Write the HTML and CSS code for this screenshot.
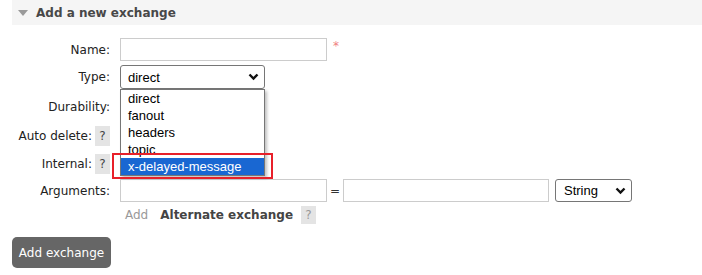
FILE: index.html
```html
<!DOCTYPE html>
<html>
<head>
<meta charset="utf-8">
<link rel="stylesheet" href="styles.css">
</head>
<body>
<div class="section">
  <div class="section-head">
    <span class="tri"></span>
    <h2 class="title">Add a new exchange</h2>
  </div>
  <div class="form">
    <div class="row r-name">
      <label class="lbl">Name:</label>
      <div class="field">
        <span class="input w207"></span>
        <span class="req">*</span>
      </div>
    </div>
    <div class="row r-type">
      <label class="lbl">Type:</label>
      <div class="field">
        <span class="select w145">direct
          <svg class="chev" width="11" height="8" viewBox="0 0 11 8"><path d="M1.5 1.5 L5.5 5.5 L9.5 1.5" fill="none" stroke="#111" stroke-width="2.4"/></svg>
        </span>
      </div>
    </div>
    <div class="row r-dur">
      <label class="lbl">Durability:</label>
    </div>
    <div class="row r-auto">
      <label class="lbl">Auto delete: <span class="help">?</span></label>
    </div>
    <div class="row r-int">
      <label class="lbl">Internal: <span class="help">?</span></label>
    </div>
    <div class="row r-args">
      <label class="lbl">Arguments:</label>
      <div class="field">
        <span class="input w207"></span>
        <span class="eq">=</span>
        <span class="input w206"></span>
        <span class="select w77 str">String
          <svg class="chev" width="11" height="8" viewBox="0 0 11 8"><path d="M1.5 1.5 L5.5 5.5 L9.5 1.5" fill="none" stroke="#111" stroke-width="2.4"/></svg>
        </span>
      </div>
    </div>
    <div class="row r-add">
      <span class="lbl"></span>
      <div class="field">
        <span class="add">Add</span>
        <span class="alt">Alternate exchange</span>
        <span class="help light">?</span>
      </div>
    </div>
    <button class="btn">Add exchange</button>

    <div class="dropdown">
      <div class="opt">direct</div>
      <div class="opt">fanout</div>
      <div class="opt">headers</div>
      <div class="opt">topic</div>
      <div class="opt sel">x-delayed-message</div>
    </div>
    <div class="mark"></div>
  </div>
</div>
</body>
</html>
```
FILE: styles.css
```css
html, body {
  margin: 0;
  padding: 0;
  background: #fff;
}
body {
  font-family: "DejaVu Sans", Verdana, sans-serif;
  font-size: 12px;
  color: #222;
  width: 702px;
  height: 275px;
  overflow: hidden;
}
.section-head {
  margin-left: 12px;
  height: 25px;
  background: #f5f5f5;
  display: flex;
  align-items: center;
}
.tri {
  width: 0;
  height: 0;
  margin-left: 6px;
  margin-right: 8px;
  border-left: 5.5px solid transparent;
  border-right: 5.5px solid transparent;
  border-top: 6px solid #9a9a9a;
}
.title {
  margin: 0;
  font-size: 12px;
  font-weight: bold;
  color: #484848;
}
.form {
  position: relative;
  display: flex;
  flex-direction: column;
}
.row {
  display: flex;
  align-items: center;
}
.lbl {
  width: 110px;
  flex: none;
  text-align: right;
  display: flex;
  justify-content: flex-end;
  align-items: center;
  gap: 3px;
  color: #222;
}
.field {
  margin-left: 10px;
  display: flex;
  align-items: center;
}
.r-name { margin-top: 13px; height: 23px; }
.r-type { margin-top: 4px; height: 24px; }
.r-dur { margin-top: 8px; height: 20px; }
.r-auto { margin-top: 9px; height: 20px; }
.r-int { margin-top: 8px; height: 20px; }
.r-args { margin-top: 5px; height: 23px; }
.r-add { margin-top: 3px; height: 19px; }
.input {
  display: block;
  box-sizing: border-box;
  height: 23px;
  border: 1px solid #ccc;
  background: #fff;
}
.w207 { width: 207px; }
.w206 { width: 206px; }
.req {
  color: #f08080;
  font-size: 12px;
  margin-left: 6px;
  align-self: flex-start;
  margin-top: 1px;
}
.select {
  box-sizing: border-box;
  height: 24px;
  border: 1px solid #767676;
  border-radius: 3px;
  background: #fff;
  display: flex;
  align-items: center;
  justify-content: space-between;
  padding: 0 5px 0 7px;
  font-family: "Liberation Sans", Arial, sans-serif;
  font-size: 13px;
  color: #000;
}
.w145 { width: 145px; }
.w77 { width: 77px; margin-left: 6px; height: 23px; }
.str { padding-left: 8px; }
.chev { display: block; }
.eq {
  width: 16px;
  text-align: center;
  color: #333;
}
.help {
  display: inline-flex;
  align-items: center;
  justify-content: center;
  width: 15px;
  height: 20px;
  background: #e4e4e4;
  color: #444;
  font-size: 12px;
  flex: none;
}
.help.light {
  color: #999;
  margin-left: 8px;
  height: 18px;
}
.add {
  color: #999;
  margin-left: 5px;
  font-size: 12px;
}
.alt {
  margin-left: 12px;
  font-weight: bold;
  color: #444;
  font-size: 12px;
}
.btn {
  align-self: flex-start;
  margin-top: 13px;
  margin-left: 12px;
  width: 99px;
  height: 31px;
  border: none;
  border-radius: 5px;
  background: #666;
  color: #fff;
  font-family: "DejaVu Sans", Verdana, sans-serif;
  font-size: 12px;
  padding: 0;
}
.dropdown {
  position: absolute;
  left: 120px;
  top: 64px;
  width: 145px;
  box-sizing: border-box;
  border: 1px solid #767676;
  background: #fff;
  box-shadow: 2px 2px 3px rgba(0,0,0,0.25);
  font-family: "Liberation Sans", Arial, sans-serif;
  font-size: 13px;
  color: #000;
}
.opt {
  height: 17px;
  line-height: 17px;
  padding-left: 7px;
}
.opt.sel {
  background: #1967d2;
  color: #fff;
}
.mark {
  position: absolute;
  left: 112px;
  top: 128px;
  width: 161px;
  height: 26px;
  box-sizing: border-box;
  border: 2px solid #e8202a;
}
```
